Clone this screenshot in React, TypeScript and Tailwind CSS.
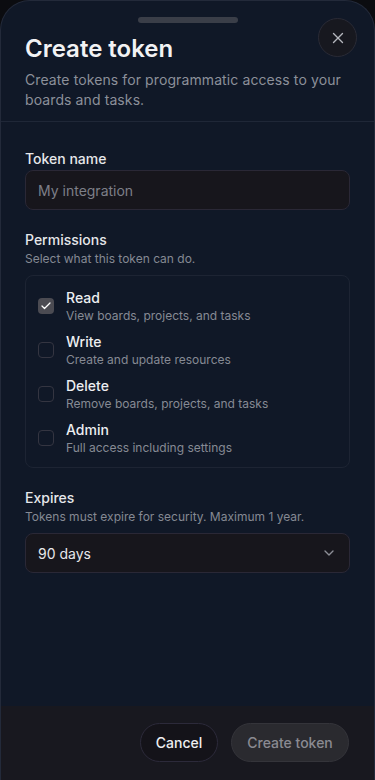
import { useState } from "react";
import { X, Check, ChevronDown } from "lucide-react";

const permissions = [
  { id: "read", name: "Read", description: "View boards, projects, and tasks" },
  { id: "write", name: "Write", description: "Create and update resources" },
  { id: "delete", name: "Delete", description: "Remove boards, projects, and tasks" },
  { id: "admin", name: "Admin", description: "Full access including settings" },
];

const App = () => {
  const [tokenName, setTokenName] = useState("");
  const [selected, setSelected] = useState<string[]>(["read"]);

  const togglePermission = (id: string) => {
    setSelected((prev) => (prev.includes(id) ? prev.filter((p) => p !== id) : [...prev, id]));
  };

  return (
    <div
      className="h-[780px] w-full bg-[#0b0c10] flex flex-col"
      style={{ fontFamily: "Inter, 'Noto Sans', sans-serif" }}
    >
      {/* SHEET */}
      <div className="relative flex-1 flex flex-col rounded-t-[30px] border border-b-0 border-[#232a3a] bg-[#101827] overflow-hidden">
        {/* HEADER */}
        <div className="px-6 pt-[16px] pb-[11px] border-b border-[#1f2737]">
          <div className="mx-auto h-[6px] w-[100px] rounded-full bg-[#3a3e48]" />
          <h2 className="mt-[10px] text-[24px] leading-8 font-semibold text-[#f2f2f4]">
            Create token
          </h2>
          <p className="mt-[5px] text-[14px] leading-5 text-[#8c909a] tracking-[0.1px]">
            Create tokens for programmatic access to your boards and tasks.
          </p>
        </div>

        <button className="absolute right-[17px] top-[17px] flex h-[39px] w-[39px] items-center justify-center rounded-full border border-[#2a2b36] bg-[#17181f] text-[#b5b7be]">
          <X className="h-[18px] w-[18px]" strokeWidth={1.8} />
        </button>

        {/* BODY */}
        <div className="flex-1 px-6 pt-[27px]">
          <label className="block text-[14px] leading-5 font-medium text-[#e6e7ea]">Token name</label>
          <input
            className="mt-[1px] h-[40px] w-full rounded-[8px] border border-[#2a2836] bg-[#17161c] px-3 text-[14px] text-[#e6e7ea] placeholder:text-[#7d7f88] outline-none"
            placeholder="My integration"
            value={tokenName}
            onChange={(e) => setTokenName(e.target.value)}
          />

          <div className="mt-[20px]">
            <div className="text-[14px] leading-5 font-medium text-[#e6e7ea]">Permissions</div>
            <div className="text-[12px] leading-[18px] text-[#858993]">Select what this token can do.</div>
          </div>

          <div className="mt-[7px] rounded-[8px] border border-[#1d2433] px-3 pt-[12px] pb-[11px] flex flex-col gap-[8px]">
            {permissions.map((perm) => {
              const isChecked = selected.includes(perm.id);
              return (
                <label key={perm.id} className="flex items-start gap-3 cursor-pointer">
                  <button
                    type="button"
                    onClick={() => togglePermission(perm.id)}
                    className={
                      isChecked
                        ? "mt-[10px] flex h-4 w-4 shrink-0 items-center justify-center rounded-[4px] bg-[#4b4b52] text-white"
                        : "mt-[10px] h-4 w-4 shrink-0 rounded-[4px] border border-[#343541]"
                    }
                  >
                    {isChecked && <Check className="h-3 w-3" strokeWidth={2.5} />}
                  </button>
                  <div>
                    <div className="text-[14px] leading-5 font-medium text-[#eceef1]">{perm.name}</div>
                    <div className="text-[12px] leading-4 text-[#868a94]">{perm.description}</div>
                  </div>
                </label>
              );
            })}
          </div>

          <div className="mt-[20px]">
            <div className="text-[14px] leading-5 font-medium text-[#e6e7ea]">Expires</div>
            <div className="text-[12px] leading-[18px] text-[#858993]">
              Tokens must expire for security. Maximum 1 year.
            </div>
          </div>

          <button className="mt-[7px] flex h-[40px] w-full items-center justify-between rounded-[8px] border border-[#2a2836] bg-[#17161c] px-3 text-[14px] text-[#e6e7ea]">
            <span>90 days</span>
            <ChevronDown className="h-4 w-4 text-[#8d8f97]" strokeWidth={2} />
          </button>
        </div>

        {/* FOOTER */}
        <div className="h-[74px] bg-[#18181f] flex justify-end items-start gap-[13px] pt-[17px] pr-[25px]">
          <button className="h-[39px] w-[78px] rounded-full border border-[#2c2a3a] bg-[#141319] text-[14px] font-medium text-[#eeeef0]">
            Cancel
          </button>
          <button className="h-[39px] w-[118px] rounded-full border border-[#34343a] bg-[#2a2a2f] text-[14px] font-medium text-[#8a8a92]">
            Create token
          </button>
        </div>
      </div>
    </div>
  );
};

export default App;
